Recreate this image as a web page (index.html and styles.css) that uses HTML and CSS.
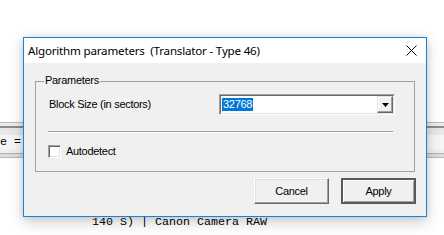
FILE: index.html
```html
<!DOCTYPE html>
<html>
<head>
<meta charset="utf-8">
<link rel="stylesheet" href="styles.css">
</head>
<body>
<div class="app">
  <div class="strip">
    <div class="ln l1"></div>
    <div class="ln l2"></div>
    <div class="ln l3"></div>
    <div class="ln l4"></div>
    <div class="eq">e =</div>
    <div class="ln l5"></div>
    <div class="ln l6"></div>
    <div class="ln l7"></div>
  </div>
  <div class="status">140 S) | Canon Camera RAW</div>
</div>

<div class="dialog">
  <div class="titlebar">
    <span class="title">Algorithm parameters  (Translator - Type 46)</span>
    <svg class="close" width="11" height="11" viewBox="0 0 11 11"><path d="M0.5 0.5 L10.5 10.5 M10.5 0.5 L0.5 10.5" stroke="#000" stroke-width="1" fill="none"/></svg>
  </div>
  <div class="body">
    <div class="group">
      <span class="legend">Parameters</span>
      <div class="row">
        <span class="label">Block Size (in sectors)</span>
        <div class="combo">
          <div class="combo-in">
            <span class="sel">32768</span>
            <span class="drop"><svg width="7" height="4" viewBox="0 0 7 4"><path d="M0 0 H7 L3.5 4 Z" fill="#000"/></svg></span>
          </div>
        </div>
      </div>
      <div class="sep"></div>
      <div class="check-row">
        <span class="check"></span>
        <span class="check-label">Autodetect</span>
      </div>
    </div>
    <div class="buttons">
      <div class="btn"><span>Cancel</span></div>
      <div class="btn default"><span>Apply</span></div>
    </div>
  </div>
</div>
</body>
</html>
```
FILE: styles.css
```css
html, body {
  margin: 0;
  padding: 0;
  background: #ffffff;
  width: 444px;
  height: 235px;
  overflow: hidden;
}
.app {
  display: flex;
  flex-direction: column;
  height: 235px;
}
.strip {
  margin-top: 122px;
  display: flex;
  flex-direction: column;
}
.ln { height: 1px; flex: none; }
.l1 { background: #b9b9b9; }
.l2 { height: 3px; background: #ececec; }
.l3 { height: 2px; background: #8c8c8c; }
.l4 { height: 7px; background: #e8e8e8; }
.eq {
  font-family: "Liberation Mono", monospace;
  font-size: 11.67px;
  line-height: 14px;
  height: 14px;
  color: #000;
  padding-left: 0;
  background: #f6f6f6;
}
.l5 { height: 4px; background: #f0f0f0; }
.l6 { background: #b0b0b0; }
.l7 { height: 3px; background: #dcdcdc; border-bottom: 1px solid #b8b8b8; }
.status {
  margin-top: 57px;
  padding-left: 92px;
  font-family: "Liberation Mono", monospace;
  font-size: 11.67px;
  line-height: 14px;
  color: #000;
  white-space: pre;
}
.dialog {
  position: absolute;
  left: 23px;
  top: 37px;
  width: 402px;
  height: 178px;
  border: 1px solid #1883d7;
  background: #f0f0f0;
  box-shadow: 0 5px 14px rgba(0,0,0,0.2), 0 0 6px rgba(0,0,0,0.10);
  display: flex;
  flex-direction: column;
}
.titlebar {
  height: 25px;
  flex: none;
  background: #ffffff;
  display: flex;
  align-items: center;
  padding-left: 4px;
  padding-right: 9px;
}
.title {
  flex: 1;
  font-family: "Noto Sans", sans-serif;
  font-size: 11.6px;
  letter-spacing: -0.2px;
  color: #000;
  white-space: pre;
  line-height: 16px;
  margin-top: 1px;
}
.close { display: block; }
.body {
  flex: 1;
  padding: 18px 10px 12px 10px;
  display: flex;
  flex-direction: column;
  font-family: "Liberation Sans", Arial, sans-serif;
  font-size: 11px;
  letter-spacing: -0.3px;
  color: #000;
}
.group {
  position: relative;
  margin: 0 1px;
  border: 1px solid #a0a0a0;
  height: 91px;
  box-sizing: border-box;
  flex: none;
  padding: 12px 19px 0 12px;
  display: flex;
  flex-direction: column;
}
.legend {
  position: absolute;
  left: 8px;
  top: -8px;
  padding: 0 1px;
  background: #f0f0f0;
  line-height: 13px;
}
.row {
  display: flex;
  align-items: center;
  height: 21px;
}
.label {
  width: 171px;
  line-height: 13px;
  padding-left: 1px;
  box-sizing: border-box;
}
.combo {
  flex: 1;
  height: 21px;
  box-sizing: border-box;
  border-top: 1px solid #a0a0a0;
  border-left: 1px solid #a0a0a0;
  border-right: 1px solid #ffffff;
  border-bottom: 1px solid #ffffff;
}
.combo-in {
  height: 100%;
  box-sizing: border-box;
  border-top: 1px solid #696969;
  border-left: 1px solid #696969;
  border-right: 1px solid #e3e3e3;
  border-bottom: 1px solid #e3e3e3;
  background: #fff;
  display: flex;
  align-items: center;
  padding-left: 1px;
}
.sel {
  background: #0078d7;
  color: #fff;
  line-height: 13px;
  padding: 0 1px;
  flex: none;
}
.drop {
  margin-left: auto;
  width: 16px;
  height: 17px;
  box-sizing: border-box;
  background: #f0f0f0;
  border-top: 1px solid #e3e3e3;
  border-left: 1px solid #e3e3e3;
  border-right: 1px solid #696969;
  border-bottom: 1px solid #696969;
  box-shadow: inset -1px -1px 0 #a0a0a0, inset 1px 1px 0 #fff;
  display: flex;
  align-items: center;
  justify-content: center;
}
.drop svg { display: block; }
.sep {
  margin-top: 16px;
  margin-right: 2px;
  height: 1px;
  background: #a0a0a0;
  border-bottom: 1px solid #ffffff;
}
.check-row {
  margin-top: 12px;
  display: flex;
  align-items: center;
  height: 13px;
}
.check {
  width: 13px;
  height: 13px;
  box-sizing: border-box;
  background: #fff;
  border-top: 1px solid #a0a0a0;
  border-left: 1px solid #a0a0a0;
  border-right: 1px solid #fff;
  border-bottom: 1px solid #fff;
  box-shadow: inset 1px 1px 0 #696969, inset -1px -1px 0 #e3e3e3;
}
.check-label {
  margin-left: 5px;
  line-height: 13px;
}
.buttons {
  margin-top: 6px;
  display: flex;
  justify-content: flex-end;
  gap: 12px;
}
.btn {
  width: 75px;
  height: 26px;
  box-sizing: border-box;
  background: #f0f0f0;
  border-top: 1px solid #fff;
  border-left: 1px solid #fff;
  border-right: 1px solid #696969;
  border-bottom: 1px solid #696969;
  box-shadow: inset -1px -1px 0 #a0a0a0, inset 1px 1px 0 #e3e3e3;
  display: flex;
  align-items: center;
  justify-content: center;
  line-height: 13px;
}
.btn.default {
  border: 1px solid #5a5a5a;
  box-shadow: inset 1px 1px 0 #5a5a5a, inset -1px -1px 0 #5a5a5a, inset 2px 2px 0 #fff, inset -2px -2px 0 #a0a0a0;
}
```
